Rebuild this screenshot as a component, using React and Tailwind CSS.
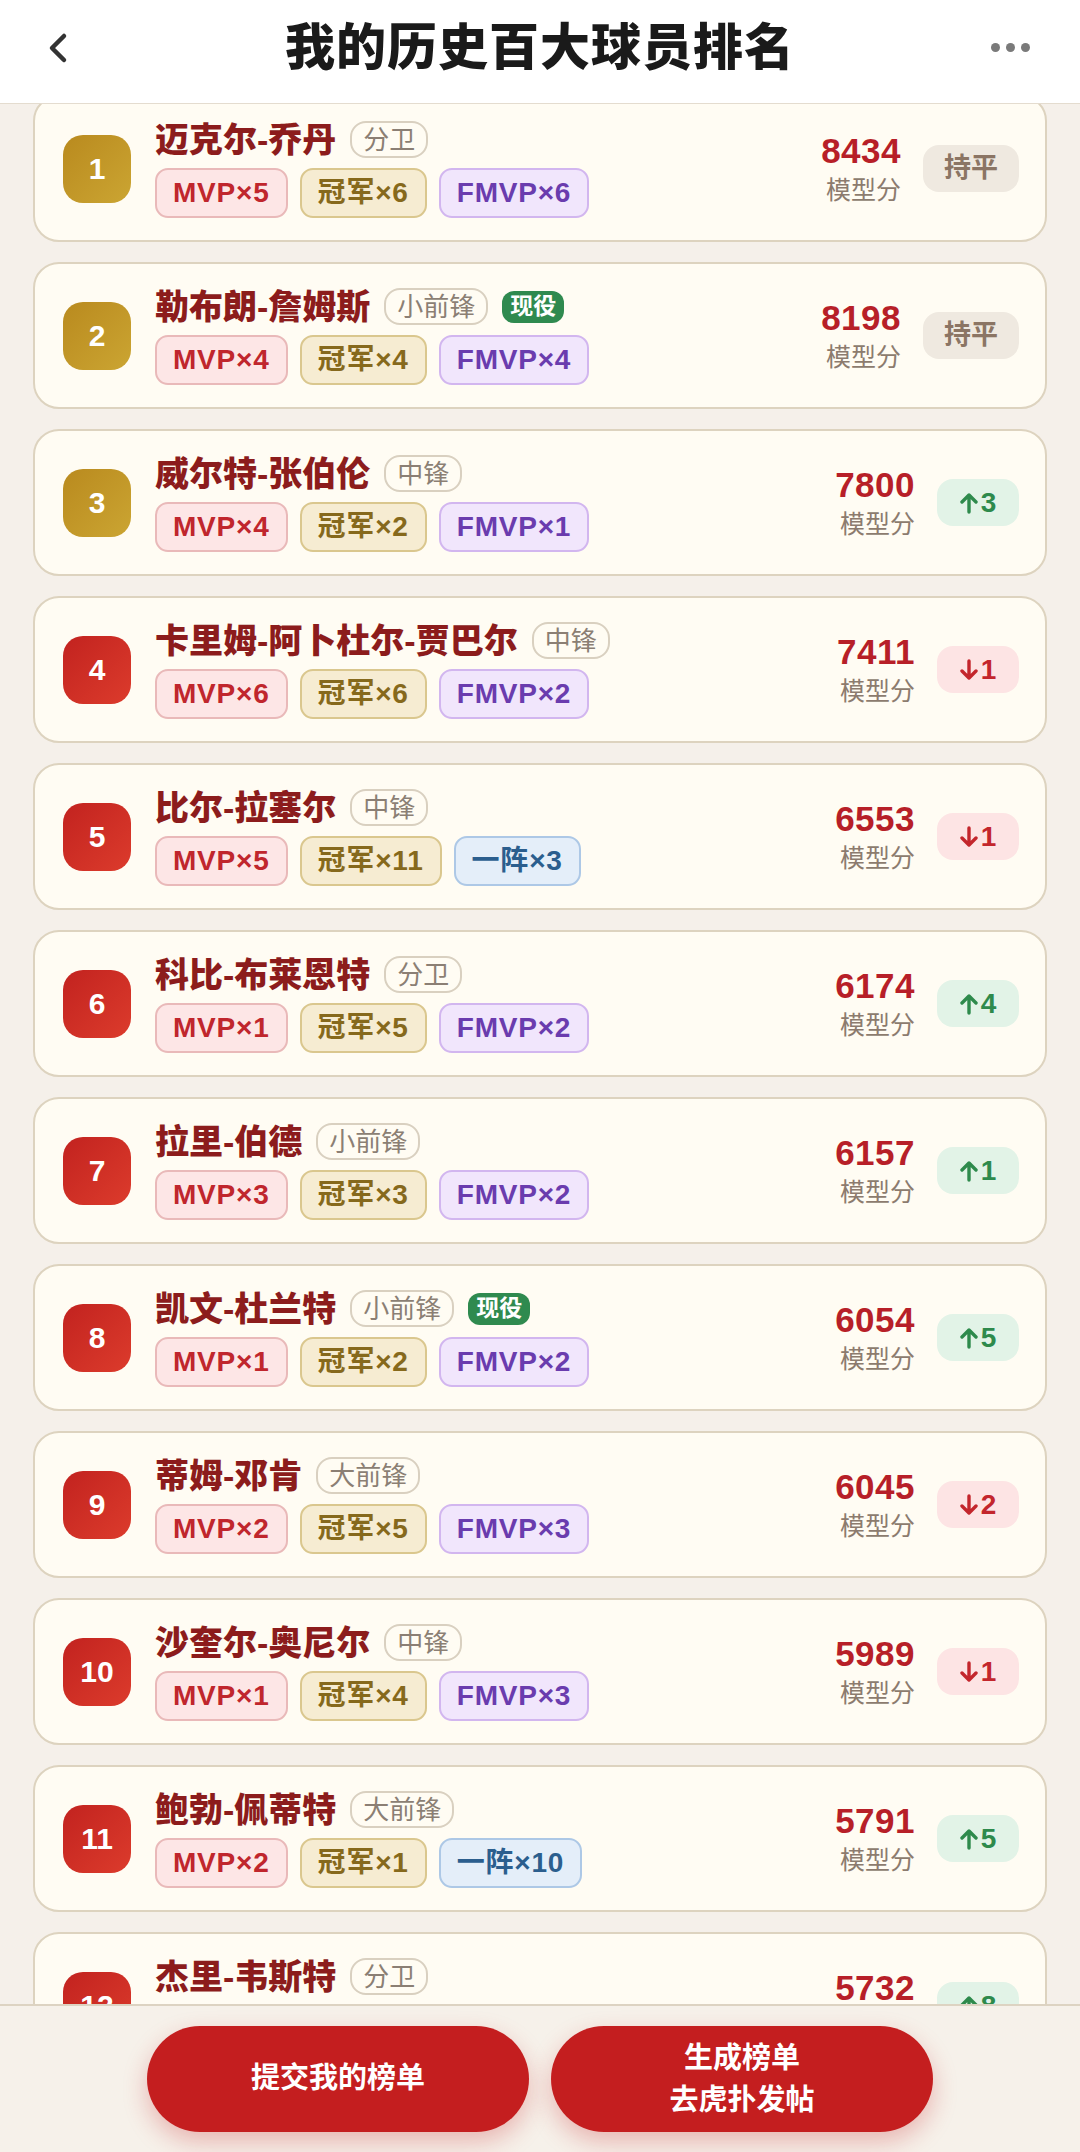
import React from 'react';

const PLAYERS = [
  { rank: 1, name: '迈克尔-乔丹', pos: '分卫', tags: [['mvp', 'MVP×5'], ['champ', '冠军×6'], ['fmvp', 'FMVP×6']], score: 8434, change: 'flat' },
  { rank: 2, name: '勒布朗-詹姆斯', pos: '小前锋', active: true, tags: [['mvp', 'MVP×4'], ['champ', '冠军×4'], ['fmvp', 'FMVP×4']], score: 8198, change: 'flat' },
  { rank: 3, name: '威尔特-张伯伦', pos: '中锋', tags: [['mvp', 'MVP×4'], ['champ', '冠军×2'], ['fmvp', 'FMVP×1']], score: 7800, change: 3 },
  { rank: 4, name: '卡里姆-阿卜杜尔-贾巴尔', pos: '中锋', tags: [['mvp', 'MVP×6'], ['champ', '冠军×6'], ['fmvp', 'FMVP×2']], score: 7411, change: -1 },
  { rank: 5, name: '比尔-拉塞尔', pos: '中锋', tags: [['mvp', 'MVP×5'], ['champ', '冠军×11'], ['team', '一阵×3']], score: 6553, change: -1 },
  { rank: 6, name: '科比-布莱恩特', pos: '分卫', tags: [['mvp', 'MVP×1'], ['champ', '冠军×5'], ['fmvp', 'FMVP×2']], score: 6174, change: 4 },
  { rank: 7, name: '拉里-伯德', pos: '小前锋', tags: [['mvp', 'MVP×3'], ['champ', '冠军×3'], ['fmvp', 'FMVP×2']], score: 6157, change: 1 },
  { rank: 8, name: '凯文-杜兰特', pos: '小前锋', active: true, tags: [['mvp', 'MVP×1'], ['champ', '冠军×2'], ['fmvp', 'FMVP×2']], score: 6054, change: 5 },
  { rank: 9, name: '蒂姆-邓肯', pos: '大前锋', tags: [['mvp', 'MVP×2'], ['champ', '冠军×5'], ['fmvp', 'FMVP×3']], score: 6045, change: -2 },
  { rank: 10, name: '沙奎尔-奥尼尔', pos: '中锋', tags: [['mvp', 'MVP×1'], ['champ', '冠军×4'], ['fmvp', 'FMVP×3']], score: 5989, change: -1 },
  { rank: 11, name: '鲍勃-佩蒂特', pos: '大前锋', tags: [['mvp', 'MVP×2'], ['champ', '冠军×1'], ['team', '一阵×10']], score: 5791, change: 5 },
  { rank: 12, name: '杰里-韦斯特', pos: '分卫', tags: [['champ', '冠军×1'], ['fmvp', 'FMVP×1'], ['team', '一阵×10']], score: 5732, change: 8 },
];

const TAG_STYLES = {
  mvp:   'bg-[#fde6e6] border-[#e9b9b9] text-[#c0262d]',
  champ: 'bg-[#f6ecd2] border-[#dac78e] text-[#86691c]',
  fmvp:  'bg-[#f1e6fc] border-[#d2b6ef] text-[#6a3cae]',
  team:  'bg-[#e4eef9] border-[#adc8e6] text-[#2b5e8e]',
};

const FONT = { fontFamily: '"Liberation Sans", "Noto Sans CJK SC", sans-serif' };

export default function App() {
  return (
    <div className="relative h-screen overflow-hidden bg-[#f5f0ea]" style={FONT}>
      {/* Header */}
      <div className="fixed top-0 inset-x-0 z-10 h-[104px] pb-[8px] bg-white border-b border-[#e4dccf] flex items-center justify-between px-[40px]">
        <svg width="30" height="36" viewBox="0 0 30 36" className="ml-[4px]">
          <path d="M20 6 L8 18 L20 30" fill="none" stroke="#333" strokeWidth="4.5" strokeLinecap="round" strokeLinejoin="round" />
        </svg>
        <h1 className="absolute left-1/2 top-[23px] -translate-x-1/2 text-[50px] font-black text-[#1a1a1a] tracking-[1px] leading-none whitespace-nowrap">
          我的历史百大球员排名
        </h1>
        <div className="flex items-center gap-[6px] mr-[10px]">
          <span className="w-[9px] h-[9px] rounded-full bg-[#7a7a7a]" />
          <span className="w-[9px] h-[9px] rounded-full bg-[#7a7a7a]" />
          <span className="w-[9px] h-[9px] rounded-full bg-[#7a7a7a]" />
        </div>
      </div>

      {/* List */}
      <div className="pt-[95px] px-[33px] flex flex-col gap-[20px]">
        {PLAYERS.map(p => <PlayerCard key={p.rank} p={p} />)}
      </div>

      {/* Bottom actions */}
      <div className="fixed bottom-0 inset-x-0 z-10 h-[148px] bg-[#f6f1ea] border-t-2 border-[#ddd3c2] flex items-center justify-center gap-[22px]">
        <button className="w-[382px] h-[106px] rounded-full bg-[#c41e1f] text-white text-[29px] font-bold shadow-[0_10px_24px_rgba(196,30,31,0.28)]">
          提交我的榜单
        </button>
        <button className="w-[382px] h-[106px] rounded-full bg-[#c41e1f] text-white text-[29px] font-bold leading-[42px] shadow-[0_10px_24px_rgba(196,30,31,0.28)]">
          生成榜单<br />去虎扑发帖
        </button>
      </div>
    </div>
  );
}

function PlayerCard({ p }) {
  const gold = p.rank <= 3;
  return (
    <div className="h-[147px] shrink-0 rounded-[26px] border-2 border-[#ddd3bf] bg-[#fffcf3] flex items-center pl-[28px] pr-[26px]">
      <div className={`w-[68px] h-[68px] shrink-0 rounded-[20px] flex items-center justify-center text-white text-[30px] font-bold bg-linear-to-br ${gold ? 'from-[#b98a1e] to-[#cba532]' : 'from-[#c2221f] to-[#dc3b2c]'}`}>
        {p.rank}
      </div>

      <div className="flex-1 min-w-0 ml-[24px] flex flex-col gap-[8px]">
        <div className="flex items-center gap-[14px] h-[40px]">
          <span className="text-[34px] font-black text-[#8c1c1c] leading-none whitespace-nowrap">{p.name}</span>
          <span className="h-[37px] px-[11px] rounded-[16px] border-2 border-[#d9d0c0] text-[26px] text-[#8b7f74] flex items-center leading-none">
            {p.pos}
          </span>
          {p.active && (
            <span className="h-[32px] px-[8px] rounded-[12px] bg-[#2f8a4f] text-white text-[23px] font-bold flex items-center leading-none">
              现役
            </span>
          )}
        </div>
        <div className="flex items-center gap-[12px]">
          {p.tags.map(([kind, label]) => (
            <span key={label} className={`h-[50px] px-[16px] rounded-[13px] border-2 text-[28px] font-bold tracking-[0.8px] flex items-center leading-none ${TAG_STYLES[kind]}`}>
              {label}
            </span>
          ))}
        </div>
      </div>

      <div className="flex flex-col items-end shrink-0">
        <span className="text-[35px] font-bold text-[#b71f28] leading-[42px] tracking-[0.5px]">{p.score}</span>
        <span className="text-[25px] text-[#8c7b6e] leading-[36px]">模型分</span>
      </div>

      <ChangeBadge change={p.change} />
    </div>
  );
}

function ChangeBadge({ change }) {
  if (change === 'flat') {
    return (
      <div className="ml-[22px] w-[96px] h-[47px] shrink-0 rounded-[16px] bg-[#efe9e0] text-[#8b7564] text-[27px] font-bold flex items-center justify-center">
        持平
      </div>
    );
  }
  const up = change > 0;
  return (
    <div className={`ml-[22px] w-[82px] h-[47px] shrink-0 rounded-[16px] text-[28px] font-bold flex items-center justify-center gap-[3px] ${up ? 'bg-[#e2f3e7] text-[#2e8a4c]' : 'bg-[#fde4e4] text-[#c3262c]'}`}>
      <svg width="18" height="22" viewBox="0 0 18 22" className={up ? '' : 'rotate-180'}>
        <path d="M9 20 V3 M2 10 L9 3 L16 10" fill="none" stroke="currentColor" strokeWidth="3.4" strokeLinecap="round" strokeLinejoin="round" />
      </svg>
      <span>{Math.abs(change)}</span>
    </div>
  );
}
